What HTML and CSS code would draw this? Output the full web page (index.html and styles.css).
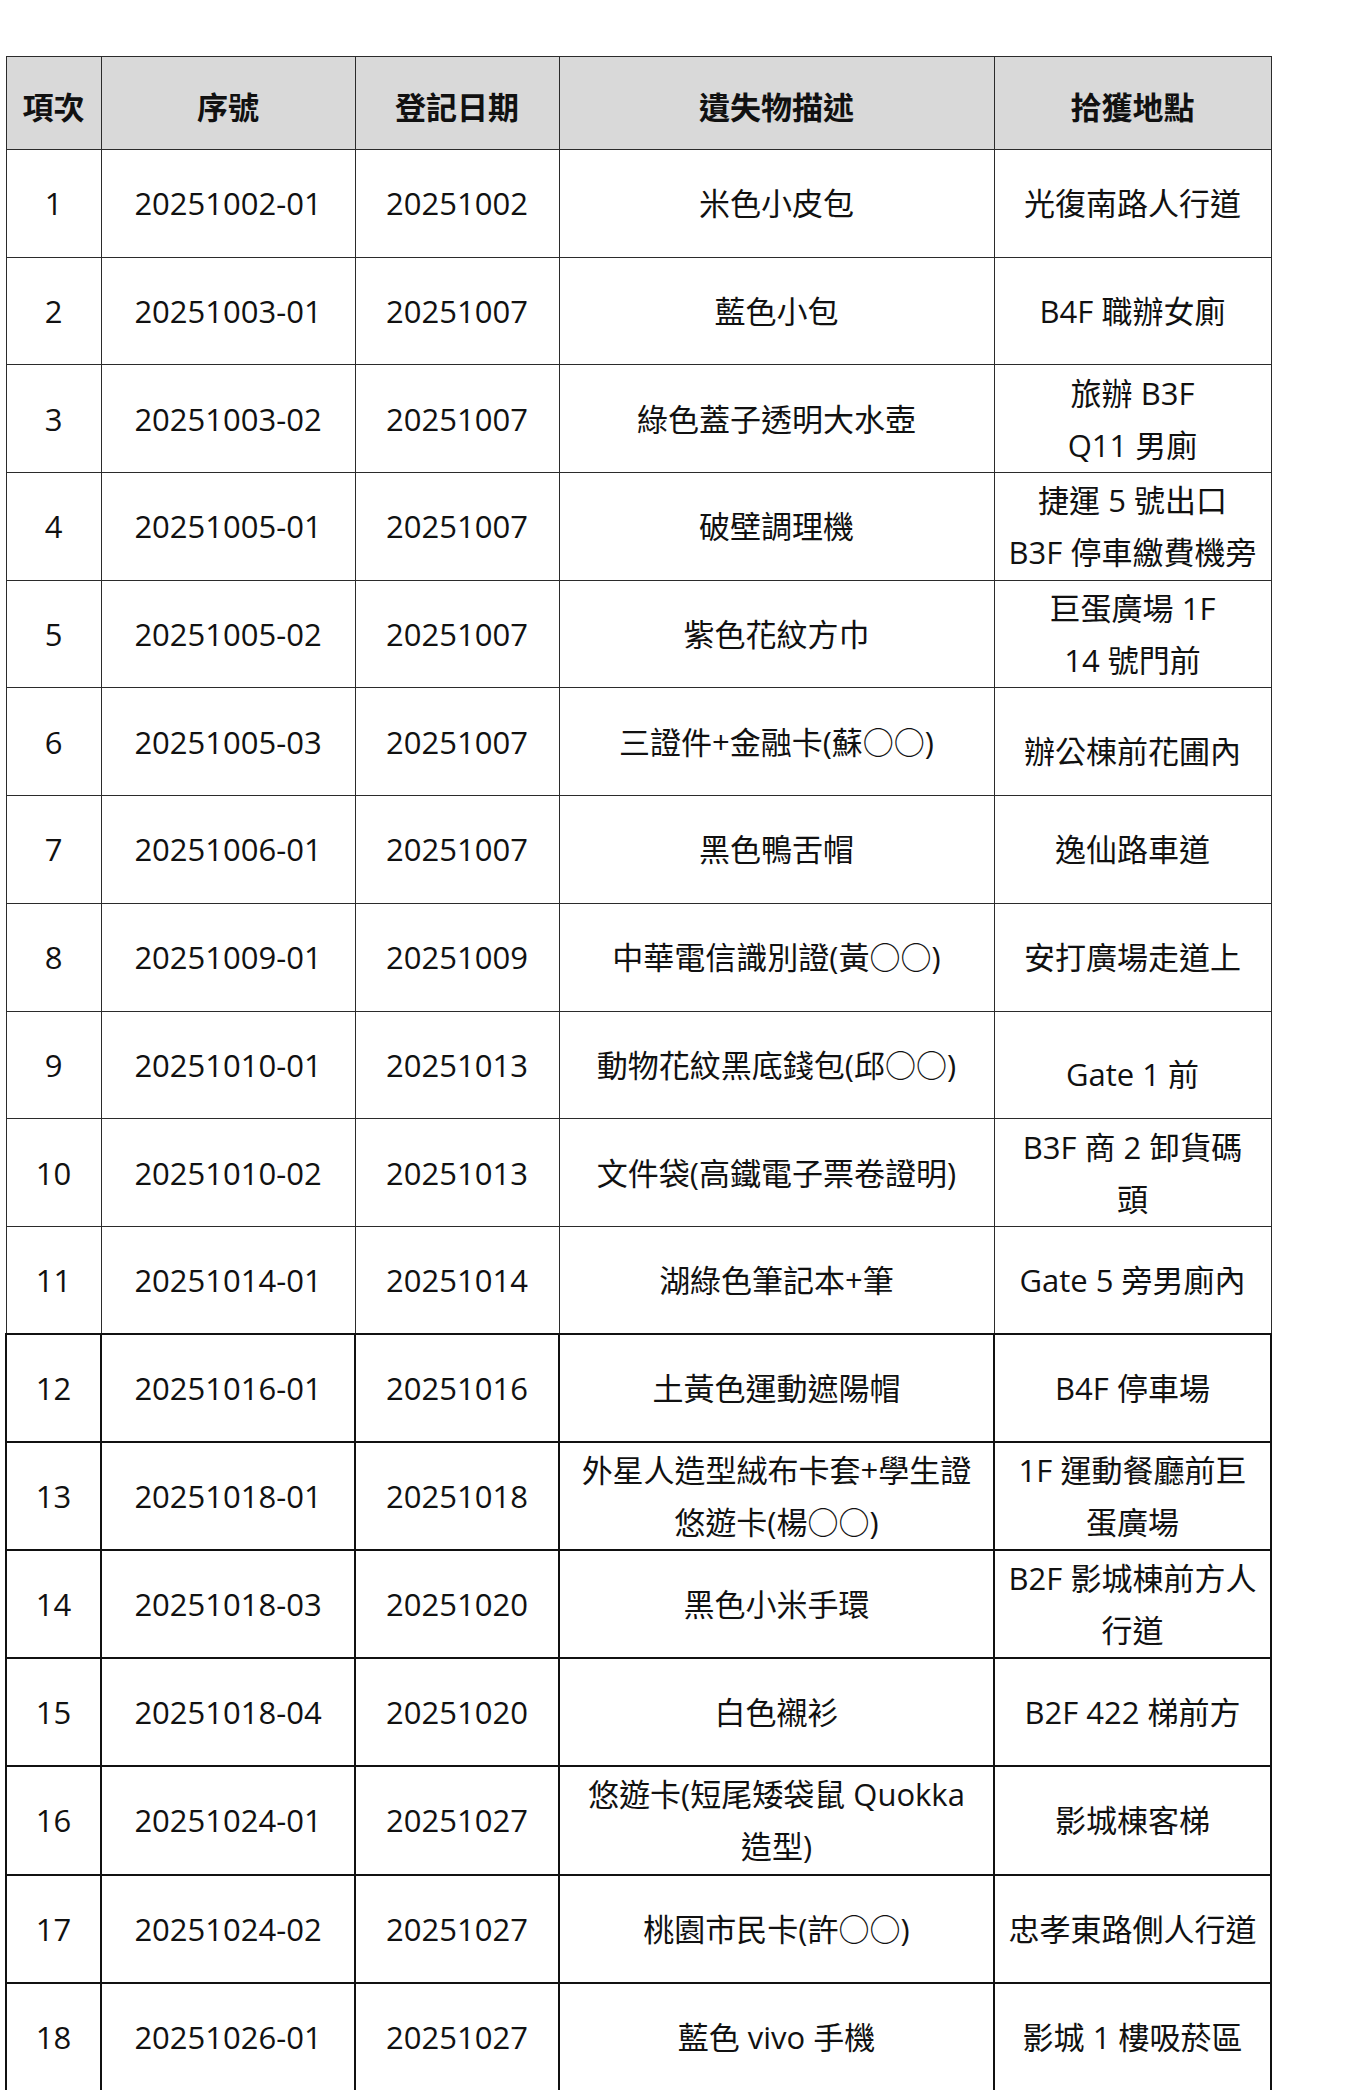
FILE: index.html
```html
<!DOCTYPE html>
<html lang="zh-Hant">
<head>
<meta charset="utf-8">
<title>遺失物清單</title>
<link rel="stylesheet" href="styles.css">
</head>
<body>
<table class="lost">
  <colgroup>
    <col class="c1"><col class="c2"><col class="c3"><col class="c4"><col class="c5">
  </colgroup>
  <thead>
    <tr class="head"><th>項次</th><th>序號</th><th>登記日期</th><th>遺失物描述</th><th>拾獲地點</th></tr>
  </thead>
  <tbody>
    <tr><td>1</td><td>20251002-01</td><td>20251002</td><td>米色小皮包</td><td>光復南路人行道</td></tr>
    <tr><td>2</td><td>20251003-01</td><td>20251007</td><td>藍色小包</td><td>B4F 職辦女廁</td></tr>
    <tr><td>3</td><td>20251003-02</td><td>20251007</td><td>綠色蓋子透明大水壺</td><td>旅辦 B3F<br>Q11 男廁</td></tr>
    <tr><td>4</td><td>20251005-01</td><td>20251007</td><td>破壁調理機</td><td>捷運 5 號出口<br>B3F 停車繳費機旁</td></tr>
    <tr><td>5</td><td>20251005-02</td><td>20251007</td><td>紫色花紋方巾</td><td>巨蛋廣場 1F<br>14 號門前</td></tr>
    <tr><td>6</td><td>20251005-03</td><td>20251007</td><td>三證件+金融卡(蘇○○)</td><td class="low">辦公棟前花圃內</td></tr>
    <tr><td>7</td><td>20251006-01</td><td>20251007</td><td>黑色鴨舌帽</td><td>逸仙路車道</td></tr>
    <tr><td>8</td><td>20251009-01</td><td>20251009</td><td>中華電信識別證(黃○○)</td><td>安打廣場走道上</td></tr>
    <tr><td>9</td><td>20251010-01</td><td>20251013</td><td>動物花紋黑底錢包(邱○○)</td><td class="low">Gate 1 前</td></tr>
    <tr><td>10</td><td>20251010-02</td><td>20251013</td><td>文件袋(高鐵電子票卷證明)</td><td>B3F 商 2 卸貨碼<br>頭</td></tr>
    <tr><td>11</td><td>20251014-01</td><td>20251014</td><td>湖綠色筆記本+筆</td><td>Gate 5 旁男廁內</td></tr>
    <tr class="strong"><td>12</td><td>20251016-01</td><td>20251016</td><td>土黃色運動遮陽帽</td><td>B4F 停車場</td></tr>
    <tr class="strong"><td>13</td><td>20251018-01</td><td>20251018</td><td>外星人造型絨布卡套+學生證<br>悠遊卡(楊○○)</td><td>1F 運動餐廳前巨<br>蛋廣場</td></tr>
    <tr class="strong"><td>14</td><td>20251018-03</td><td>20251020</td><td>黑色小米手環</td><td>B2F 影城棟前方人<br>行道</td></tr>
    <tr class="strong"><td>15</td><td>20251018-04</td><td>20251020</td><td>白色襯衫</td><td>B2F 422 梯前方</td></tr>
    <tr class="strong"><td>16</td><td>20251024-01</td><td>20251027</td><td>悠遊卡(短尾矮袋鼠 Quokka<br>造型)</td><td>影城棟客梯</td></tr>
    <tr class="strong"><td>17</td><td>20251024-02</td><td>20251027</td><td>桃園市民卡(許○○)</td><td>忠孝東路側人行道</td></tr>
    <tr class="strong"><td>18</td><td>20251026-01</td><td>20251027</td><td>藍色 vivo 手機</td><td>影城 1 樓吸菸區</td></tr>
  </tbody>
</table>
</body>
</html>
```

FILE: styles.css
```css
html, body {
  margin: 0;
  padding: 0;
  background: #ffffff;
}

body {
  font-family: "Open Sans", "Noto Sans CJK TC", sans-serif;
  color: #111111;
}

.lost {
  margin: 56px 0 0 5px;
  border-collapse: collapse;
  table-layout: fixed;
  width: 1265px;
  font-size: 31px;
}

.c1 { width: 95px; }
.c2 { width: 254px; }
.c3 { width: 204px; }
.c4 { width: 435px; }
.c5 { width: 277px; }

.lost th,
.lost td {
  border: 1.5px solid #2b2b2b;
  padding: 0;
  text-align: center;
  vertical-align: middle;
  line-height: 52px;
  white-space: nowrap;
}

.lost th {
  background: #d9d9d9;
  font-weight: 700;
  padding-top: 8px;
}

.head {
  height: 93px;
}

.lost tbody tr {
  height: 107.7px;
}

.lost tbody tr.strong {
  height: 108.1px;
}

.lost tr.strong td {
  border: 2px solid #111111;
}

.lost td.low {
  padding-top: 18px;
}
```
